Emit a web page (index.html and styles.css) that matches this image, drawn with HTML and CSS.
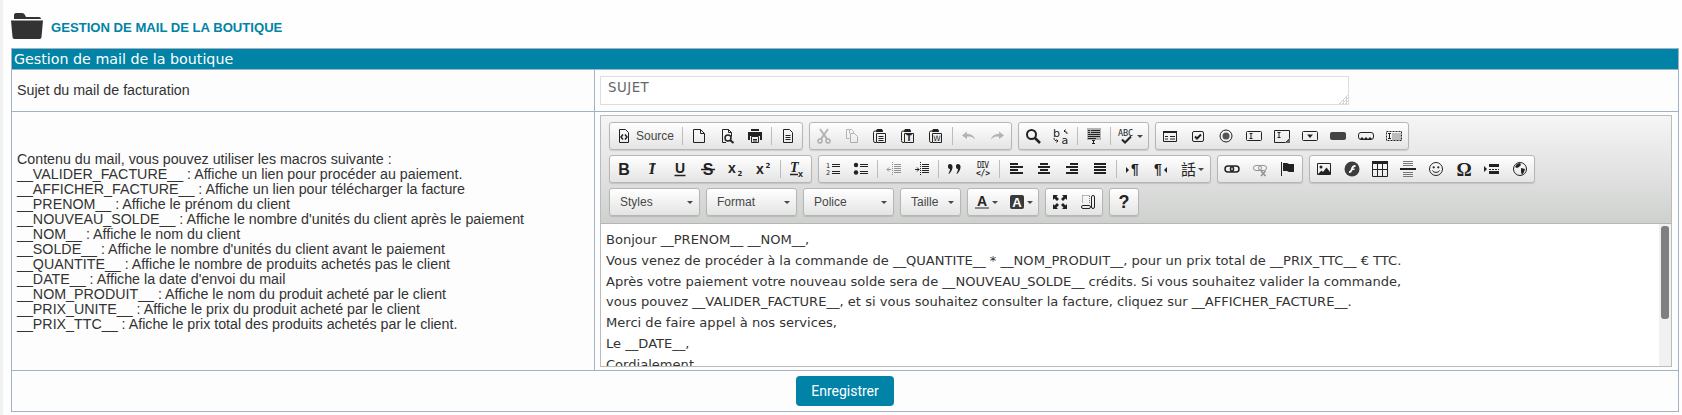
FILE: index.html
```html
<!DOCTYPE html>
<html lang="fr">
<head>
<meta charset="utf-8">
<title>Gestion de mail de la boutique</title>
<link rel="stylesheet" href="styles.css">
</head>
<body>
<div class="page">
  <header class="head">
    <svg class="folder" viewBox="0 0 32 26"><path d="M3 5.500V2q0-2 2-2h6q2 0 3 2l1 2h13q2 0 2 2H3z"/><path d="M0 7.500h32l-1.500 16.500q0 2-2 2H3.500q-2 0-2-2z"/></svg>
    <h1 class="title">GESTION DE MAIL DE LA BOUTIQUE</h1>
  </header>
  <table class="tbl">
    <colgroup><col class="c1"><col class="c2"></colgroup>
    <tr><th colspan="2" class="th">Gestion de mail de la boutique</th></tr>
    <tr class="r1">
      <td class="lbl subj">Sujet du mail de facturation</td>
      <td class="sub"><textarea class="subject">SUJET</textarea></td>
    </tr>
    <tr class="r2">
      <td class="lbl macros">Contenu du mail, vous pouvez utiliser les macros suivante :<br>__VALIDER_FACTURE__ : Affiche un lien pour procéder au paiement.<br>__AFFICHER_FACTURE__ : Affiche un lien pour télécharger la facture<br>__PRENOM__ : Affiche le prénom du client<br>__NOUVEAU_SOLDE__ : Affiche le nombre d'unités du client après le paiement<br>__NOM__ : Affiche le nom du client<br>__SOLDE__ : Affiche le nombre d'unités du client avant le paiement<br>__QUANTITE__ : Affiche le nombre de produits achetés pas le client<br>__DATE__ : Affiche la date d'envoi du mail<br>__NOM_PRODUIT__ : Affiche le nom du produit acheté par le client<br>__PRIX_UNITE__ : Affiche le prix du produit acheté par le client<br>__PRIX_TTC__ : Afiche le prix total des produits achetés par le client.</td>
      <td class="edcell">
        <div class="editor">
          <div class="toolbar">
            <div class="row">
              <div class="grp">
                <a class="b src"><svg class="i" viewBox="0 0 16 16"><path class="o" d="M3.500 1.500h6l3 3v10h-9z"/><path class="o s15" d="M7 6.500 5 9l2 2.500M9 6.500l2 2.500-2 2.500"/></svg><span class="lab">Source</span></a><i class="sep"></i>
                <a class="b"><svg class="i" viewBox="0 0 16 16"><path class="o" d="M2.500 1.500h7l4 4v9h-11zM9.500 1.500v4h4"/></svg></a>
                <a class="b"><svg class="i" viewBox="0 0 16 16"><path class="o" d="M7 14.500H3.500v-13h6l3 3v4M9.500 1.500v3h3"/><circle class="o s15" cx="9" cy="10" r="3"/><path class="o s2" d="M11 12l3.500 3"/></svg></a>
                <a class="b"><svg class="i" viewBox="0 0 16 16"><path class="f" d="M4 1h8v2H4zM1 4h14v8h-2V8H3v4H1z"/><path class="o" d="M4.500 8.500h7v6h-7zM6 11.500h4M6 13h4"/></svg></a><i class="sep"></i>
                <a class="b"><svg class="i" viewBox="0 0 16 16"><path class="o" d="M3.500 1.500h6l3 3v10h-9zM5.500 7.500h5M5.500 9.500h5M5.500 11.500h5"/></svg></a>
              </div>
              <div class="grp">
                <a class="b off"><svg class="i" viewBox="0 0 16 16"><circle class="o s15" cx="4" cy="13" r="2"/><circle class="o s15" cx="12" cy="13" r="2"/><path class="o s2" d="M5 11 12 1M11 11 4 1"/></svg></a>
                <a class="b off"><svg class="i" viewBox="0 0 16 16"><path class="o" d="M5.500 5.500v-4h-3v9h3M2.500 1.500h5l2 2v2"/><path class="o" d="M6.500 5.500h4l3 3v6h-7z"/></svg></a>
                <a class="b"><svg class="i" viewBox="0 0 16 16"><path class="o" d="M4.500 3H3q-1.500 0-1.500 1.500v8q0 2 1.500 2h1"/><path class="f" d="M5 1h5l1 2v1H4V3z"/><path class="o" d="M4.500 5.500h9v9h-9zM6.500 8.500h5M6.500 10.500h5M6.500 12.500h5"/></svg></a>
                <a class="b"><svg class="i" viewBox="0 0 16 16"><path class="o" d="M4.500 3H3q-1.500 0-1.500 1.500v8q0 2 1.500 2h1"/><path class="f" d="M5 1h5l1 2v1H4V3z"/><path class="o" d="M4.500 5.500h9v9h-9z"/><text class="t tb" x="9" y="13" font-size="8" text-anchor="middle">T</text></svg></a>
                <a class="b"><svg class="i" viewBox="0 0 16 16"><path class="o" d="M4.500 3H3q-1.500 0-1.500 1.500v8q0 2 1.500 2h1"/><path class="f" d="M5 1h5l1 2v1H4V3z"/><path class="o" d="M4.500 5.500h9v9h-9z"/><text class="t" x="9" y="13" font-size="7.500" text-anchor="middle">W</text></svg></a><i class="sep"></i>
                <a class="b off"><svg class="i" viewBox="0 0 16 16"><path class="f" d="M1 7.500l5-4v2.500c4 0 7 1.500 8 5.500-2-2.500-4-3-8-3V11z"/></svg></a>
                <a class="b off"><svg class="i" viewBox="0 0 16 16"><path class="f" d="M15 7.500l-5-4v2.500c-4 0-7 1.500-8 5.500 2-2.500 4-3 8-3V11z"/></svg></a>
              </div>
              <div class="grp">
                <a class="b"><svg class="i" viewBox="0 0 16 16"><circle class="o s2" cx="6.500" cy="6.500" r="4.500"/><path class="o s25" d="M10 10l5 5"/></svg></a>
                <a class="b"><svg class="i" viewBox="0 0 16 16"><text class="t" x="0" y="9" font-size="11">b</text><text class="t" x="8.500" y="16" font-size="11">a</text><path class="o" d="M14 6c0-2-1-3-3-3M12.500 1.500 11 3l1.500 1.500M1 10c0 2 1 3 4 3M3.500 11.500 5 13l-1.500 1.500"/></svg></a><i class="sep"></i>
                <a class="b"><svg class="i" viewBox="0 0 16 16"><path d="M1 0h14v12H1z" fill="#b4b4b4"/><path class="o" d="M2 2.500h2M5 2.500h9M2 4.500h2M5 4.500h9M2 6.500h12M2 8.500h12M2 10.500h8M6 12.500h3M7.500 12.500v3M6 15.500h3"/></svg></a><i class="sep"></i>
                <a class="b spell"><svg class="i" viewBox="0 0 16 16"><text class="t mono" x="0" y="8" font-size="8.500" textLength="15">ABC</text><path class="o s2" d="M4 11.500l3 3 6-6"/></svg><i class="ar"></i></a>
              </div>
              <div class="grp">
                <a class="b"><svg class="i" viewBox="0 0 16 16"><path class="o" d="M1.500 3.500h13v10h-13z"/><path class="f" d="M1 3h14v2H1z"/><path class="o" d="M3 8.500h3M3 11h3M8 8.500h5M8 11h5"/></svg></a>
                <a class="b"><svg class="i" viewBox="0 0 16 16"><rect class="o" x="2.500" y="3.500" width="11" height="10" rx="1.500"/><path class="o s2" d="M5 8.500l2 2 4-4"/></svg></a>
                <a class="b"><svg class="i" viewBox="0 0 16 16"><circle class="o" cx="8" cy="8" r="6"/><circle cx="8" cy="8" r="3.500" fill="#555"/></svg></a>
                <a class="b"><svg class="i" viewBox="0 0 16 16"><rect class="o" x=".5" y="3.500" width="15" height="9" rx="1"/><path class="o" d="M3.500 5.500h3M3.500 10.500h3M5 5.500v5"/></svg></a>
                <a class="b"><svg class="i" viewBox="0 0 16 16"><path class="o" d="M.5 2.500h15v8l-4 4H.5z"/><path class="o" d="M3.500 4.500h3M3.500 9.500h3M5 4.500v5"/><path d="M11 15l5-5v5z" fill="#666"/></svg></a>
                <a class="b"><svg class="i" viewBox="0 0 16 16"><rect class="o" x=".5" y="3.500" width="15" height="9" rx="1"/><path class="f" d="M5 6.500h6L8 10z"/></svg></a>
                <a class="b"><svg class="i" viewBox="0 0 16 16"><rect x="0" y="4" width="16" height="8" rx="2" fill="#444"/></svg></a>
                <a class="b"><svg class="i" viewBox="0 0 16 16"><rect class="o" x=".5" y="4.500" width="15" height="7" rx="2.500"/><path class="f" d="M2 11l2-2 2 2 2-2 2 2 2-2 2 2z"/></svg></a>
                <a class="b"><svg class="i" viewBox="0 0 16 16"><path d="M6 5h9v7H6z" fill="#bbb"/><path class="o" stroke-dasharray="2 1" d="M.5 3.500h15v9H.5z"/><path class="o" d="M2 5.500h3M2 10.500h3M3.500 5.500v5"/></svg></a>
              </div>
            </div>
            <div class="row">
              <div class="grp">
                <a class="b"><svg class="i" viewBox="0 0 16 16"><text class="t tb lib" x="8" y="13.500" font-size="16" text-anchor="middle">B</text></svg></a>
                <a class="b"><svg class="i" viewBox="0 0 16 16"><text class="t tb serif" x="8" y="13" font-size="16" font-style="italic" text-anchor="middle">I</text><path class="o" d="M5 3h7"/></svg></a>
                <a class="b"><svg class="i" viewBox="0 0 16 16"><text class="t tb lib" x="8" y="12" font-size="14" text-anchor="middle">U</text><path class="o s15" d="M2.500 14.500h11"/></svg></a>
                <a class="b"><svg class="i" viewBox="0 0 16 16"><text class="t tb lib" x="8" y="14" font-size="16" text-anchor="middle">S</text><path class="o s15" d="M1 8.500h14"/></svg></a>
                <a class="b"><svg class="i" viewBox="0 0 16 16"><text class="t tb lib" x="0" y="11.500" font-size="14">x</text><text class="t tb" x="9.500" y="15" font-size="7">2</text></svg></a>
                <a class="b"><svg class="i" viewBox="0 0 16 16"><text class="t tb lib" x="0" y="13" font-size="14">x</text><text class="t tb" x="9.500" y="7" font-size="7">2</text></svg></a><i class="sep"></i>
                <a class="b"><svg class="i" viewBox="0 0 16 16"><text class="t tb serif" x="1" y="11" font-size="14" font-style="italic">T</text><path class="o s15" d="M1 13.500h8"/><text class="t tb lib" x="9" y="15.500" font-size="9">x</text></svg></a>
              </div>
              <div class="grp">
                <a class="b"><svg class="i" viewBox="0 0 16 16"><text class="t" x="1" y="7" font-size="6.500">1</text><text class="t" x="1" y="14" font-size="6.500">2</text><path class="o" d="M7 3.500h8M7 5.500h8M7 10.500h8M7 12.500h8"/></svg></a>
                <a class="b"><svg class="i" viewBox="0 0 16 16"><circle class="f" cx="3" cy="4" r="2.200"/><circle class="f" cx="3" cy="11.500" r="2.200"/><path class="o" d="M7 3.500h8M7 5.500h8M7 10.500h8M7 12.500h8"/></svg></a><i class="sep"></i>
                <a class="b off2"><svg class="i" viewBox="0 0 16 16"><path class="o" stroke-dasharray="1 1" d="M6.500 1v14"/><path class="o" d="M8 3.500h7M8 5.500h7M8 7.500h7M8 9.500h7M8 11.500h7M5 8.500H1M3 6.500 1 8.500l2 2"/></svg></a>
                <a class="b"><svg class="i" viewBox="0 0 16 16"><path class="o" stroke-dasharray="1 1" d="M6.500 1v14"/><path class="o" d="M8 3.500h7M8 5.500h7M8 7.500h7M8 9.500h7M8 11.500h7M1 8.500h4M3 6.500l2 2-2 2"/></svg></a><i class="sep"></i>
                <a class="b"><svg class="i" viewBox="0 0 16 16"><path class="f" d="M1 4.500q0-1.500 2-1.500t2.500 2q.5 4-3.500 8L1.500 12.500Q3 10 3 8 1 8 1 6zM9 4.500q0-1.500 2-1.500t2.500 2q.5 4-3.500 8l-.5-.5Q11 10 11 8 9 8 9 6z"/></svg></a>
                <a class="b"><svg class="i" viewBox="0 0 16 16"><text class="t mono" x="2" y="7" font-size="8" textLength="12">DIV</text><text class="t mono tb" x="1" y="15" font-size="8" textLength="14">&lt;/&gt;</text></svg></a><i class="sep"></i>
                <a class="b"><svg class="i" viewBox="0 0 16 16"><path class="f" d="M2 2h8v2H2zM2 5h13v2H2zM2 8h8v2H2zM2 11h13v2H2z"/></svg></a>
                <a class="b"><svg class="i" viewBox="0 0 16 16"><path class="f" d="M4 2h8v2H4zM2 5h12v2H2zM4 8h8v2H4zM2 11h12v2H2z"/></svg></a>
                <a class="b"><svg class="i" viewBox="0 0 16 16"><path class="f" d="M6 2h8v2H6zM2 5h12v2H2zM6 8h8v2H6zM2 11h12v2H2z"/></svg></a>
                <a class="b"><svg class="i" viewBox="0 0 16 16"><path class="f" d="M2 2h12v2H2zM2 5h12v2H2zM2 8h12v2H2zM2 11h12v2H2z"/></svg></a><i class="sep"></i>
                <a class="b"><svg class="i" viewBox="0 0 16 16"><path class="f" d="M1 6l3 3-3 3z"/><text class="t tb lib" x="6" y="13" font-size="14">¶</text></svg></a>
                <a class="b"><svg class="i" viewBox="0 0 16 16"><text class="t tb lib" x="1" y="13" font-size="14">¶</text><path class="f" d="M14 6l-3 3 3 3z"/></svg></a>
                <a class="b lang"><span class="hz">話</span><i class="ar"></i></a>
              </div>
              <div class="grp">
                <a class="b"><svg class="i" viewBox="0 0 16 16"><rect class="o s15" x="1" y="5" width="8.500" height="6" rx="3"/><rect class="o s15" x="6.500" y="5" width="8.500" height="6" rx="3"/></svg></a>
                <a class="b off2"><svg class="i" viewBox="0 0 16 16"><rect class="o" x="1.500" y="4.500" width="8" height="5" rx="2.500"/><rect class="o" x="6.500" y="4.500" width="8" height="5" rx="2.500"/><path class="o s15" d="M9 10l4.500 5M13.500 10 9 15"/></svg></a>
                <a class="b"><svg class="i" viewBox="0 0 16 16"><path class="o" d="M1.500 1v14"/><path class="f" d="M3 2h4l2 1h5v8H9L7 10H3z"/></svg></a>
              </div>
              <div class="grp">
                <a class="b"><svg class="i" viewBox="0 0 16 16"><path class="o" d="M1.500 2.500h13v11h-13z"/><circle class="f" cx="5" cy="6" r="1.500"/><path class="f" d="M2 13l3.500-3.500L7 11l3.500-4.500L14 11v2z"/></svg></a>
                <a class="b"><svg class="i" viewBox="0 0 16 16"><circle cx="8" cy="8" r="7.500" fill="#3d3d3d"/><path d="M5 12c2 0 3-1 3.500-3h2V7.500H9c.3-1 1-1.500 2.500-1.500V4C9 4 7.500 5.500 7 8 6.500 9.500 6 10 5 10z" fill="#fff"/></svg></a>
                <a class="b"><svg class="i" viewBox="0 0 16 16"><path class="f" d="M0 0h16v3H0z"/><path class="o" d="M.5 3v12.500h15V3M5.500 3v12M10.500 3v12M1 8.500h14"/></svg></a>
                <a class="b"><svg class="i" viewBox="0 0 16 16"><path d="M3 .5h10M3 2.500h10M3 4.500h10M3 11.500h10M3 13.500h10M3 15.500h10" fill="none" stroke="#777"/><path class="f" d="M0 7h16v2H0z"/></svg></a>
                <a class="b"><svg class="i" viewBox="0 0 16 16"><circle class="o" cx="8" cy="8" r="6.500"/><circle class="f" cx="5.700" cy="6.300" r="1.100"/><circle class="f" cx="10.300" cy="6.300" r="1.100"/><path class="o" d="M4.500 9.500c1 2.500 6 2.500 7 0"/></svg></a>
                <a class="b"><svg class="i" viewBox="0 0 16 16"><text class="t tb serif" x="8" y="15" font-size="19" text-anchor="middle">Ω</text></svg></a>
                <a class="b"><svg class="i" viewBox="0 0 16 16"><path class="f" d="M0 5l3 3-3 3zM5 3h10v3H5zM5 10h10v3H5z"/><path class="o" stroke-dasharray="2 1" d="M5 8.500h10"/></svg></a>
                <a class="b"><svg class="i" viewBox="0 0 16 16"><circle class="o" cx="8" cy="8" r="6.500"/><path class="f" d="M5 3l3-1 1 2-2 2-2 1-2-1zM9 7l4 1-1 3-2 3-1-3z"/></svg></a>
              </div>
            </div>
            <div class="row">
              <a class="combo w91"><span>Styles</span><i class="ar"></i></a>
              <a class="combo w91"><span>Format</span><i class="ar"></i></a>
              <a class="combo w91"><span>Police</span><i class="ar"></i></a>
              <a class="combo w61"><span>Taille</span><i class="ar"></i></a>
              <div class="grp">
                <a class="b clr"><svg class="i" viewBox="0 0 16 16"><text class="t tb lib" x="8" y="11.500" font-size="14" text-anchor="middle">A</text><path d="M1 13h14v2H1z" fill="#888"/></svg><i class="ar"></i></a>
                <a class="b clr"><svg class="i" viewBox="0 0 16 16"><rect x="1" y="1" width="14" height="14" rx="2" fill="#3a3a3a"/><text class="tw" x="8" y="12.500" font-size="13" text-anchor="middle">A</text></svg><i class="ar"></i></a>
              </div>
              <div class="grp">
                <a class="b"><svg class="i" viewBox="0 0 16 16"><path class="f" d="M1 1h5L4.500 2.500 7 5 5 7 2.500 4.500 1 6zM15 1v5l-1.500-1.500L11 7 9 5l2.500-2.500L10 1zM1 15v-5l1.500 1.500L5 9l2 2-2.500 2.500L6 15zM15 15h-5l1.500-1.500L9 11l2-2 2.500 2.500L15 10z"/></svg></a>
                <a class="b"><svg class="i" viewBox="0 0 16 16"><path d="M2.500 1.500h8M2.500 1.500v8M9.500 2v7" fill="none" stroke="#777" stroke-dasharray="1 1"/><rect class="o" x="1.500" y="11.500" width="9" height="3" rx="1.500"/><rect class="o" x="11.500" y="1.500" width="3" height="13" rx="1.500"/></svg></a>
              </div>
              <div class="grp">
                <a class="b"><svg class="i" viewBox="0 0 16 16"><text class="t tb lib" x="8" y="14" font-size="18" text-anchor="middle">?</text></svg></a>
              </div>
            </div>
          </div>
          <div class="content">
            <div class="doc">Bonjour __PRENOM__ __NOM__,<br>Vous venez de procéder à la commande de __QUANTITE__ * __NOM_PRODUIT__, pour un prix total de __PRIX_TTC__ € TTC.<br>Après votre paiement votre nouveau solde sera de __NOUVEAU_SOLDE__ crédits. Si vous souhaitez valider la commande,<br>vous pouvez __VALIDER_FACTURE__, et si vous souhaitez consulter la facture, cliquez sur __AFFICHER_FACTURE__.<br>Merci de faire appel à nos services,<br>Le __DATE__,<br>Cordialement</div>
            <div class="track"><div class="thumb"></div></div>
          </div>
        </div>
      </td>
    </tr>
    <tr class="r3"><td colspan="2" class="act"><button class="save" type="button">Enregistrer</button></td></tr>
  </table>
</div>
</body>
</html>
```

FILE: styles.css
```css
html, body { margin: 0; padding: 0; background: #fff; }
body { font-family: "Liberation Sans", Arial, sans-serif; color: #333; }
.page { border-left: 3px solid #f1f1f1; padding-left: 8px; height: 415px; box-sizing: border-box; overflow: hidden; background: #fefefe; }
.head { display: flex; height: 48px; padding-top: 13px; box-sizing: border-box; }
.folder { width: 32px; height: 26px; fill: #333; flex: none; }
.title { margin: 7px 0 0 8px; font-size: 13.1px; line-height: 15px; font-weight: bold; color: #0083a6; }
.tbl { border-collapse: collapse; table-layout: fixed; width: 1668px; background: #fdfdfd; }
.c1 { width: 583px; }
.tbl td, .tbl th { border: 1px solid #a3b1c4; padding: 0; }
.th { height: 20px; background: #0083a6; color: #fff; font: normal 14.25px/20px "DejaVu Sans", sans-serif; text-align: left; padding-left: 2px !important; }
.r1 { height: 42px; }
.lbl { padding-left: 5px !important; font-size: 14.25px; }
.subj { padding-bottom: 2px !important; }
.macros { line-height: 15px; padding-top: 1px !important; }
.sub { padding: 5px !important; }
.subject { display: block; width: 749px; height: 29px; margin: 0; padding: 3px 7px 2px; box-sizing: border-box; border: 1px solid #ddd; color: #666; background: #fff; font: 13.33px/15px "DejaVu Sans", sans-serif; letter-spacing: .5px; outline: 0; }
.subject::-webkit-resizer { background: linear-gradient(135deg, #fff 68%, transparent 68%), repeating-conic-gradient(#d4d4d4 0 25%, transparent 0 50%) 0 0 / 3px 3px; }
.edcell { padding: 3px 5px !important; }
.editor { border: 1px solid #bbb; width: 1072px; height: 252px; box-sizing: border-box; display: flex; flex-direction: column; }
.toolbar { height: 108px; flex: none; box-sizing: border-box; padding: 6px 0 0 8px; background: linear-gradient(#f5f5f5, #cfd1cf); border-bottom: 1px solid #b6b6b6; }
.row { display: flex; gap: 6px; height: 28px; margin-bottom: 5px; }
.grp { display: flex; align-items: center; height: 28px; box-sizing: border-box; border: 1px solid #b6b6b6; border-radius: 3px; background: linear-gradient(#fff, #e4e4e4); box-shadow: 0 1px 1px rgba(0,0,0,.12); }
.b { width: 28px; height: 26px; display: flex; align-items: center; justify-content: center; flex: none; }
.src { width: 70px; justify-content: flex-start; padding-left: 6px; box-sizing: border-box; }
.spell { width: 35px; gap: 3px; }
.lang { width: 35px; gap: 2px; }
.clr { width: 35px; gap: 2px; }
.lab { font-size: 12px; color: #474747; margin-left: 4px; }
.sep { display: block; width: 1px; height: 18px; margin: 0 2px; background: #bcbcbc; flex: none; }
.i { width: 16px; height: 16px; display: block; flex: none; overflow: visible; }
.o { fill: none; stroke: #222; }
.f { fill: #222; }
.s15 { stroke-width: 1.5; }
.s2 { stroke-width: 2; }
.s25 { stroke-width: 2.5; }
.t { fill: #222; font-family: "DejaVu Sans", sans-serif; }
.tw { fill: #fff; font-family: "Liberation Sans", sans-serif; font-weight: bold; }
.tb { font-weight: bold; }
.lib { font-family: "Liberation Sans", sans-serif; }
.serif { font-family: "Liberation Serif", serif; }
.mono { font-family: "DejaVu Sans Mono", monospace; }
.off { opacity: .3; }
.off2 { opacity: .45; }
.hz { font: 15px/16px "Noto Sans CJK TC", sans-serif; color: #222; }
.ar { display: block; width: 0; height: 0; flex: none; border-top: 3px solid #474747; border-left: 3px solid transparent; border-right: 3px solid transparent; }
.combo { display: flex; align-items: center; justify-content: space-between; box-sizing: border-box; height: 28px; padding: 0 6px 0 10px; border: 1px solid #b6b6b6; border-radius: 3px; background: linear-gradient(#fff, #e4e4e4); box-shadow: 0 1px 1px rgba(0,0,0,.12); font-size: 12px; color: #474747; }
.w91 { width: 91px; }
.w61 { width: 61px; }
.content { flex: 1; min-height: 0; display: flex; background: #fff; overflow: hidden; }
.doc { flex: 1; padding: 6px 0 0 5px; font: 13.07px/20.8px "DejaVu Sans", sans-serif; color: #333; overflow: hidden; }
.track { width: 12px; background: #f1f1f1; flex: none; padding: 2px; box-sizing: border-box; }
.thumb { height: 93px; background: #7f7f7f; border-radius: 3px; }
.act { text-align: center; height: 40px; }
.r2 { height: 258px; }
.save { display: inline-block; vertical-align: middle; width: 98px; height: 30px; border: 0; border-radius: 4px; background: #0083a6; color: #fff; font: 14px Roboto, sans-serif; padding: 0; }
```
